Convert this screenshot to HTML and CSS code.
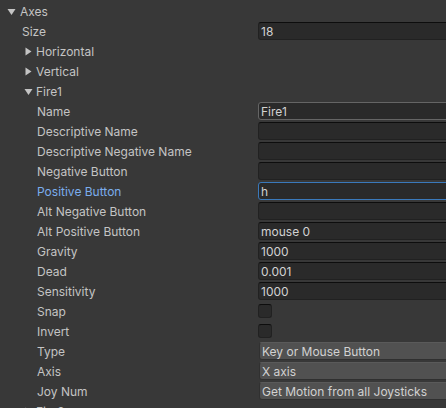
FILE: index.html
```html
<!DOCTYPE html>
<html>
<head>
<meta charset="utf-8">
<link rel="stylesheet" href="styles.css">
</head>
<body>
<div class="panel">
  <div class="row"><div class="label l0"><svg class="tri" width="9" height="9" viewBox="0 0 9 9"><polygon points="0.5,2 8.5,2 4.5,8" /></svg><span>Axes</span></div></div>
  <div class="row"><div class="label l1"><span>Size</span></div><div class="field"><span>18</span></div></div>
  <div class="row"><div class="label l1f"><svg class="tri" width="9" height="9" viewBox="0 0 9 9"><polygon points="1.5,0.5 7.5,4.5 1.5,8.5" /></svg><span>Horizontal</span></div></div>
  <div class="row"><div class="label l1f"><svg class="tri" width="9" height="9" viewBox="0 0 9 9"><polygon points="1.5,0.5 7.5,4.5 1.5,8.5" /></svg><span>Vertical</span></div></div>
  <div class="row"><div class="label l1f"><svg class="tri" width="9" height="9" viewBox="0 0 9 9"><polygon points="0.5,2 8.5,2 4.5,8" /></svg><span>Fire1</span></div></div>
  <div class="row"><div class="label l2"><span>Name</span></div><div class="field hover"><span>Fire1</span></div></div>
  <div class="row"><div class="label l2"><span>Descriptive Name</span></div><div class="field"></div></div>
  <div class="row"><div class="label l2"><span>Descriptive Negative Name</span></div><div class="field"></div></div>
  <div class="row"><div class="label l2"><span>Negative Button</span></div><div class="field"></div></div>
  <div class="row"><div class="label l2 active"><span>Positive Button</span></div><div class="field focus"><span>h</span></div></div>
  <div class="row"><div class="label l2"><span>Alt Negative Button</span></div><div class="field"></div></div>
  <div class="row"><div class="label l2"><span>Alt Positive Button</span></div><div class="field"><span>mouse 0</span></div></div>
  <div class="row"><div class="label l2"><span>Gravity</span></div><div class="field"><span>1000</span></div></div>
  <div class="row"><div class="label l2"><span>Dead</span></div><div class="field"><span>0.001</span></div></div>
  <div class="row"><div class="label l2"><span>Sensitivity</span></div><div class="field"><span>1000</span></div></div>
  <div class="row"><div class="label l2"><span>Snap</span></div><div class="check"></div></div>
  <div class="row"><div class="label l2"><span>Invert</span></div><div class="check"></div></div>
  <div class="row"><div class="label l2"><span>Type</span></div><div class="drop"><span>Key or Mouse Button</span></div></div>
  <div class="row"><div class="label l2"><span>Axis</span></div><div class="drop"><span>X axis</span></div></div>
  <div class="row"><div class="label l2"><span>Joy Num</span></div><div class="drop"><span>Get Motion from all Joysticks</span></div></div>
  <div class="row"><div class="label l1f"><svg class="tri" width="9" height="9" viewBox="0 0 9 9"><polygon points="1.5,0.5 7.5,4.5 1.5,8.5" /></svg><span>Fire2</span></div></div>
</div>
</body>
</html>
```
FILE: styles.css
```css
html, body {
  margin: 0;
  padding: 0;
  background: #383838;
  overflow: hidden;
  width: 446px;
  height: 408px;
}
.panel {
  padding-top: 1px;
  font-family: Inter, "Noto Sans", sans-serif;
  font-size: 12px;
  color: #c4c4c4;
}
.row {
  display: flex;
  align-items: center;
  height: 20px;
}
.label {
  flex: 0 0 258px;
  box-sizing: border-box;
  display: flex;
  align-items: center;
  white-space: nowrap;
}
.l0 { padding-left: 7px; }
.l1 { padding-left: 22px; }
.l1f { padding-left: 24px; }
.l2 { padding-left: 37px; }
.tri {
  fill: #c4c4c4;
  margin-right: 3px;
  flex: 0 0 auto;
}
.l0 .tri { margin-right: 4px; }
.active { color: #7badec; }
.field {
  flex: 0 0 200px;
  height: 18px;
  box-sizing: border-box;
  background: #2a2a2a;
  border: 1px solid #212121;
  border-top-color: #0d0d0d;
  border-radius: 3px;
  display: flex;
  align-items: center;
  padding-left: 2px;
  color: #d2d2d2;
}
.field.hover { border-color: #656565; }
.field.focus { border-color: #3a79bb; }
.check {
  width: 14px;
  height: 14px;
  box-sizing: border-box;
  background: #2a2a2a;
  border: 1px solid #212121;
  border-top-color: #0d0d0d;
  border-radius: 3px;
}
.drop {
  flex: 0 0 200px;
  height: 18px;
  box-sizing: border-box;
  margin-left: 1px;
  background: #515151;
  border: 1px solid #303030;
  border-top-color: #5a5a5a;
  border-radius: 3px;
  display: flex;
  align-items: center;
  padding-left: 2px;
  color: #d2d2d2;
}
```
